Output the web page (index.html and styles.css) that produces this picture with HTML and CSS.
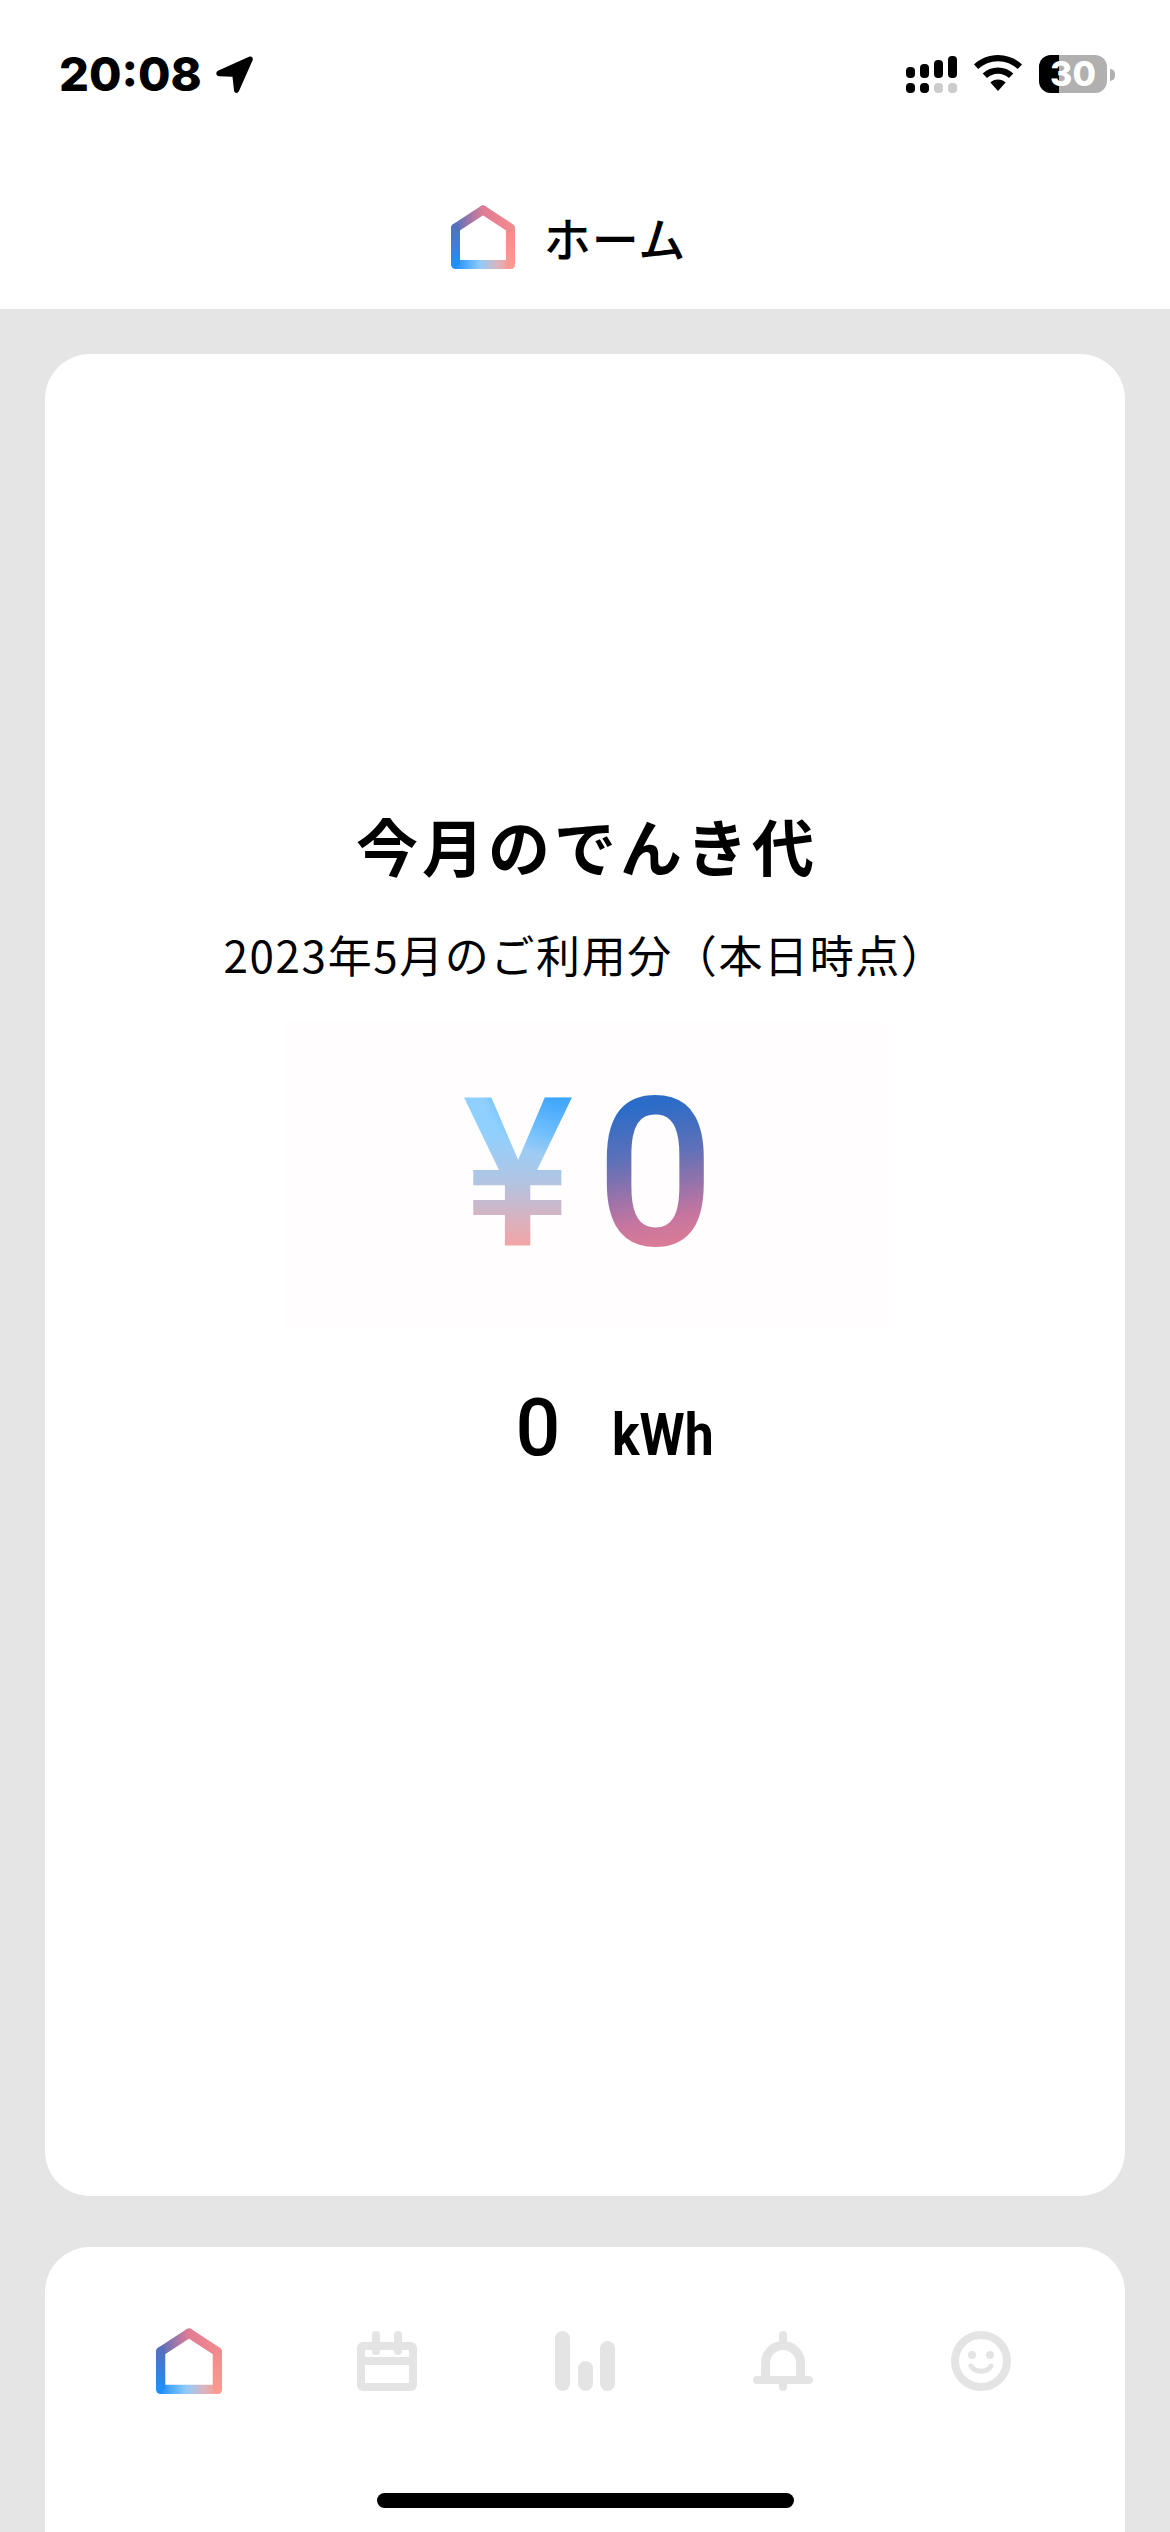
FILE: index.html
```html
<!DOCTYPE html>
<html lang="ja">
<head>
<meta charset="utf-8">
<title>ホーム</title>
<link rel="stylesheet" href="styles.css">
</head>
<body>
<svg class="defs" width="0" height="0" aria-hidden="true">
  <defs>
    <linearGradient id="hBottom" gradientUnits="userSpaceOnUse" x1="4" y1="0" x2="60" y2="0">
      <stop offset="0" stop-color="#1f8ffb"/><stop offset=".45" stop-color="#8fcbfa"/><stop offset=".75" stop-color="#d9b5bf"/><stop offset="1" stop-color="#fb9a90"/>
    </linearGradient>
    <linearGradient id="hLeft" gradientUnits="userSpaceOnUse" x1="0" y1="22" x2="0" y2="60">
      <stop offset="0" stop-color="#5470bd"/><stop offset="1" stop-color="#1f8ffb"/>
    </linearGradient>
    <linearGradient id="hRoofL" gradientUnits="userSpaceOnUse" x1="4" y1="0" x2="32" y2="0">
      <stop offset="0" stop-color="#5470bd"/><stop offset="1" stop-color="#e07c95"/>
    </linearGradient>
    <linearGradient id="hRoofR" gradientUnits="userSpaceOnUse" x1="32" y1="0" x2="60" y2="0">
      <stop offset="0" stop-color="#e07c95"/><stop offset="1" stop-color="#f28a8d"/>
    </linearGradient>
    <linearGradient id="hRight" gradientUnits="userSpaceOnUse" x1="0" y1="22" x2="0" y2="60">
      <stop offset="0" stop-color="#f28a8d"/><stop offset="1" stop-color="#fb9a90"/>
    </linearGradient>
    <g id="house" fill="none" stroke-width="9" stroke-linecap="round" stroke-linejoin="round">
      <path d="M4.5 59.5H59.5" stroke="url(#hBottom)"/>
      <path d="M59.5 24V59.5" stroke="url(#hRight)"/>
      <path d="M32 5L59.5 23" stroke="url(#hRoofR)"/>
      <path d="M4.5 23L32 5" stroke="url(#hRoofL)"/>
      <path d="M4.5 23V57" stroke="url(#hLeft)"/>
    </g>
  </defs>
</svg>
<div class="screen">
  <header class="top">
    <div class="status">
      <div class="status-left">
        <span class="time">20:08</span>
        <svg class="arrow" viewBox="0 0 37 37"><path d="M33 .8 2.500 14.500C-.8 16-.2 20 3 20.300L16.500 20.800 18 34.500C18.400 37.500 21.800 37.800 23 35L36.500 4.500C37.700 1.800 35.600-.3 33 .8Z"/></svg>
      </div>
      <div class="status-right">
        <svg class="signal" viewBox="0 0 51 37">
          <rect x="0" y="11" width="9" height="11" rx="4"/><rect x="14" y="8" width="9" height="14" rx="4"/><rect x="28" y="4" width="9" height="18" rx="4"/><rect x="42" y="0" width="9" height="22" rx="4"/>
          <rect x="0" y="27" width="9" height="10" rx="4"/><rect x="14" y="27" width="9" height="10" rx="4"/>
          <rect class="dim" x="28" y="27" width="9" height="10" rx="4"/><rect class="dim" x="42" y="27" width="9" height="10" rx="4"/>
        </svg>
        <svg class="wifi" viewBox="0 0 48 36">
          <path d="M24 0C14.500 0 6.300 3.600 0 9.400l4.300 4.600C9.600 9.200 16.300 6.200 24 6.200S38.400 9.200 43.700 14L48 9.400C41.700 3.600 33.500 0 24 0Z"/>
          <path d="M24 12.500c-6 0-11.300 2.300-15.300 5.900l4.300 4.600c2.900-2.600 6.700-4.200 11-4.200s8.100 1.600 11 4.200l4.300-4.600c-4-3.600-9.300-5.900-15.300-5.900Z"/>
          <path d="M24 24.500c-3 0-5.700 1.100-7.600 3L24 36l7.600-8.500c-1.900-1.900-4.600-3-7.600-3Z"/>
        </svg>
        <div class="battery"><span class="battery-fill"></span><span class="battery-text">30</span></div>
        <span class="battery-nub"></span>
      </div>
    </div>
    <div class="title-row">
      <svg class="house" viewBox="0 0 64 64"><use href="#house"/></svg>
      <h1 class="page-title">ホーム</h1>
    </div>
  </header>

  <main class="content">
    <section class="card">
      <h2 class="bill-title">今月のでんき代</h2>
      <p class="bill-sub">2023年5月のご利用分（本日時点）</p>
      <div class="amount">
        <span class="yen">¥</span><span class="zero">0</span>
      </div>
      <div class="usage"><span class="usage-num">0</span><span class="usage-unit">kWh</span></div>
    </section>
  </main>

  <nav class="tabs">
    <svg class="tab house-tab" viewBox="0 0 64 64"><use href="#house"/></svg>
    <svg class="tab" viewBox="0 0 60 60">
      <rect x="4" y="15" width="52" height="41" rx="2" class="line"/>
      <path d="M4 30H56" class="line"/>
      <path d="M19 4V20M41 4V20" class="line round"/>
    </svg>
    <svg class="tab" viewBox="0 0 60 60">
      <rect x="0" y="0" width="15" height="60" rx="7.500" class="solid"/>
      <rect x="23" y="30" width="15" height="30" rx="7.500" class="solid"/>
      <rect x="45" y="10" width="15" height="50" rx="7.500" class="solid"/>
    </svg>
    <svg class="tab" viewBox="0 0 60 60">
      <path d="M12.500 49V32A17.500 17.500 0 0 1 47.500 32V49" class="line bell"/>
      <path d="M4 49H56" class="line round"/>
      <path d="M30 4V12M30 53V56" class="line round"/>
    </svg>
    <svg class="tab" viewBox="0 0 60 60">
      <circle cx="30" cy="30" r="26" class="line"/>
      <circle cx="21" cy="24" r="4" class="solid"/>
      <circle cx="39" cy="24" r="4" class="solid"/>
      <path d="M20 35C24 42 36 42 40 35" class="smile"/>
    </svg>
  </nav>
  <div class="home-bar"></div>
</div>
</body>
</html>
```
FILE: styles.css
```css
* { box-sizing: border-box; margin: 0; padding: 0; }
html, body { width: 1170px; height: 2532px; overflow: hidden; }
body { background: #e5e5e5; font-family: "Noto Sans CJK JP", "Noto Sans", sans-serif; color: #000; }
.defs { position: absolute; }
.screen { position: relative; width: 1170px; height: 2532px; display: flex; flex-direction: column; }

.top { height: 309px; background: #fff; display: flex; flex-direction: column; }
.status { height: 205px; padding: 55px 55px 0 59px; display: flex; justify-content: space-between; align-items: flex-start; }
.status-left { display: flex; align-items: center; gap: 14px; height: 38px; }
.time { font-family: Inter, "Liberation Sans", sans-serif; font-weight: 800; font-size: 47px; line-height: 38px; letter-spacing: 0; }
.arrow { width: 37px; height: 37px; fill: #000; }
.status-right { display: flex; align-items: flex-start; }
.signal { width: 51px; height: 37px; margin: 1px 17px 0 0; fill: #000; }
.signal .dim { fill: #ccc; }
.wifi { width: 48px; height: 36px; margin-right: 17px; fill: #000; }
.battery { position: relative; width: 68px; height: 38px; border-radius: 12px; background: #b0b0b0; display: flex; align-items: center; justify-content: center; }
.battery-fill { position: absolute; left: 0; top: 0; bottom: 0; width: 20px; background: #000; border-radius: 12px 0 0 12px; }
.battery-text { position: relative; font-family: Inter, "Liberation Sans", sans-serif; font-weight: 800; font-size: 34px; line-height: 38px; color: #fff; }
.battery-nub { width: 5px; height: 12px; margin: 14px 0 0 3px; background: #b0b0b0; border-radius: 0 6px 6px 0; }

.title-row { display: flex; justify-content: center; align-items: center; gap: 29px; padding-right: 33px; height: 63px; }
.house { width: 64px; height: 64px; }
.page-title { font-size: 47px; font-weight: 500; line-height: 63px; letter-spacing: 1px; }

.content { padding: 45px 45px 0; }
.card { height: 1842px; background: #fff; border-radius: 45px; display: flex; flex-direction: column; align-items: center; padding-top: 446px; }
.bill-title { font-size: 62px; font-weight: 700; line-height: 90px; letter-spacing: 4px; text-align: center; padding-left: 4px; }
.bill-sub { font-size: 44px; font-weight: 400; line-height: 60px; margin-top: 34px; text-align: center; letter-spacing: 1.6px; }
.amount { width: 603px; height: 307px; margin-top: 37px; padding-left: 7px; background: #fffdfe; display: flex; align-items: center; justify-content: center; gap: 23px; font-family: Roboto, sans-serif; font-size: 208px; line-height: 307px; font-weight: 500; }
.yen, .zero { -webkit-background-clip: text; background-clip: text; color: transparent; }
.yen { background-image: radial-gradient(circle at 88% 18%, #1f94f8 0%, rgba(31,148,248,0) 30%), linear-gradient(180deg, #8fd0ff 18%, #8fd0ff 36%, #b0c5e3 52%, #f6a3a3 74%); }
.zero { background-image: linear-gradient(170deg, #2a6cc8 28%, #5f70b8 44%, #c6759f 64%, #e8808f 78%); }
.usage { display: flex; align-items: baseline; gap: 52px; margin-top: 50px; padding-left: 76px; font-family: Roboto, sans-serif; font-weight: 500; }
.usage-num { font-size: 79px; line-height: 100px; }
.usage-unit { font-size: 60px; font-weight: 700; line-height: 70px; transform: scaleX(.86); transform-origin: left center; }

.tabs { height: 285px; margin: 51px 45px 0; background: #fff; border-radius: 45px 45px 0 0; display: flex; justify-content: space-between; align-items: flex-start; padding: 84px 114px 0; }
.tab { width: 60px; height: 60px; overflow: visible; }
.house-tab { width: 66px; height: 66px; margin: -3px -3px 0; }
.line { fill: none; stroke: #e4e4e4; stroke-width: 8; }
.line.round { stroke-linecap: round; }
.line.bell { stroke-width: 9; }
.solid { fill: #e4e4e4; }
.smile { fill: none; stroke: #e4e4e4; stroke-width: 5; stroke-linecap: round; }
.home-bar { position: absolute; left: 377px; top: 2493px; width: 417px; height: 15px; background: #000; border-radius: 8px; }
```
